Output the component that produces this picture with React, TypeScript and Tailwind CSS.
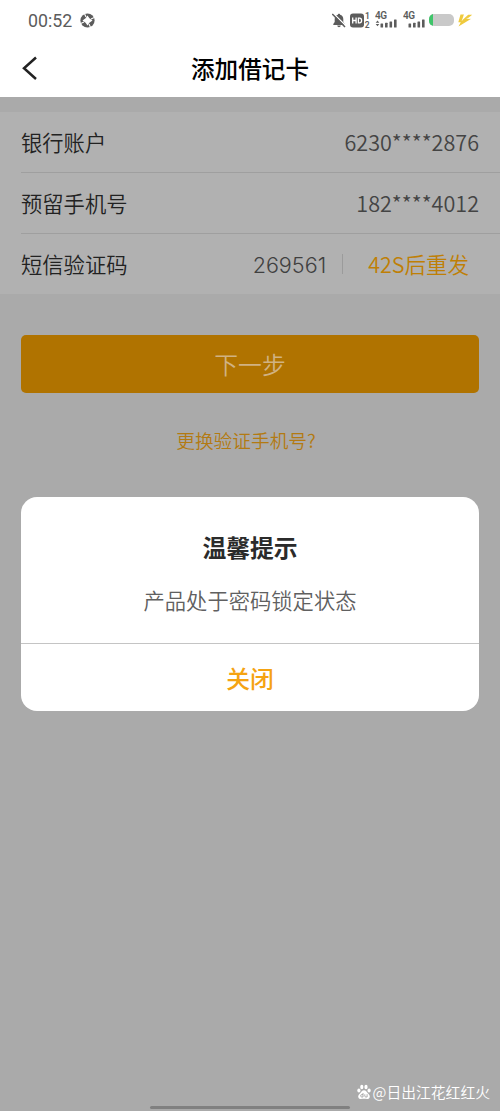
const rows = [
  { label: "银行账户", value: "6230****2876" },
  { label: "预留手机号", value: "182****4012" },
];

function SignalIcon({ data = false }: { data?: boolean }) {
  return (
    <svg width="23" height="18" viewBox="0 0 23 18" fill="#5c5c5c">
      <text x="0" y="8" fontSize="10" fontWeight="600" fontFamily="Roboto" textLength="12">
        4G
      </text>
      {data && <path d="M.7 11.7l1.8-2.3 1.8 2.3zM.7 13h3.6l-1.8 2.3z" />}
      <rect x="5.5" y="12.6" width="2.6" height="4" rx=".5" />
      <rect x="10" y="11.8" width="2.6" height="4.8" rx=".5" />
      <rect x="14.5" y="10.4" width="2.6" height="6.2" rx=".5" />
      <rect x="19" y="8.6" width="2.6" height="8" rx=".5" />
    </svg>
  );
}

function StatusBar() {
  return (
    <div className="flex h-10 items-center pl-7 text-[#5c5c5c]">
      <span className="mt-0.5 font-['Roboto',sans-serif] text-[17.8px] leading-none">00:52</span>
      <svg className="ml-2" width="15" height="15" viewBox="0 0 15 15">
        <circle cx="7.5" cy="7.5" r="7.1" fill="#5c5c5c" />
        <path d="M7.5 2.5 9.4 5.2 12.5 7.5 9.4 9.8 7.5 12.5 5.6 9.8 2.5 7.5 5.6 5.2z" fill="#fff" />
        <path d="M4.2 0 6 4M15 4.2l-4 1.8M10.8 15 9 11M0 10.8l4-1.8" stroke="#fff" strokeWidth="1.1" />
      </svg>
      <div className="ml-auto flex items-center pr-[27px]">
        <svg width="14" height="15" viewBox="0 0 14 15">
          <path d="M7 .8c.7 0 1.1.4 1.1 1 2 .5 3.2 2 3.2 4.1v3.2l1.4 2v.8H1.3v-.8l1.4-2V5.9c0-2.1 1.2-3.6 3.2-4.1 0-.6.4-1 1.1-1zM5.2 12.6h3.6c-.2 1-.9 1.6-1.8 1.6s-1.6-.6-1.8-1.6z" fill="#5c5c5c" />
          <path d="M1.2.2 14 13" stroke="#fff" strokeWidth="1.3" />
          <path d="M.3 1 13 14" stroke="#5c5c5c" strokeWidth="1.5" />
        </svg>
        <svg className="ml-1" width="20" height="17" viewBox="0 0 20 17" fill="#5c5c5c">
          <rect x="0" y="1.5" width="14" height="14" rx="3" />
          <path d="M2.7 5.5v6M6.1 5.5v6M2.7 8.5h3.4M8.4 6.1v4.8h1.2q2 0 2-2.4t-2-2.4z" stroke="#fff" strokeWidth="1.3" fill="none" />
          <text x="15" y="7" fontSize="8.5" fontWeight="600" fontFamily="Roboto">1</text>
          <text x="14.8" y="16" fontSize="8.5" fontWeight="600" fontFamily="Roboto">2</text>
        </svg>
        <div className="ml-[5px] flex gap-[5px]">
          <SignalIcon data />
          <SignalIcon />
        </div>
        <div className="ml-[3px] h-3 w-[25px] overflow-hidden rounded-[5px] bg-[#c9c9c9]">
          <div className="h-full w-1 bg-[#3fc56a]" />
        </div>
        <svg className="ml-1" width="15" height="13" viewBox="0 0 15 13" fill="#efca3d">
          <path d="M2.5.5H6L4.2 6.2 10.2.7h4L9.2 4.8h4L.5 12.6l2.3-4.4H.3z" />
          <path d="M6.6.2 4 6.8M13.2 4.4H8.6" stroke="#fff" strokeWidth=".5" />
        </svg>
      </div>
    </div>
  );
}

function Header() {
  return (
    <header className="h-[97px] bg-white">
      <StatusBar />
      <div className="grid h-[57px] grid-cols-[60px_1fr_60px] items-center">
        <svg className="-mt-0.5 ml-[22px]" width="16" height="24" viewBox="0 0 16 24" fill="none">
          <path d="M14 1.5 2 12.3 14 23" stroke="#222" strokeWidth="2.5" />
        </svg>
        <h1 className="text-center text-[23.6px] leading-none font-medium text-black">添加借记卡</h1>
      </div>
    </header>
  );
}

function Dialog() {
  return (
    <div className="absolute inset-x-[21px] top-[497px] flex h-[214px] flex-col rounded-2xl bg-white text-center">
      <div className="flex h-[147px] flex-col items-center border-b border-[#c4c4c4] pt-[37px]">
        <h2 className="text-[23.8px] leading-[26px] font-bold text-[#2b2b2b]">温馨提示</h2>
        <p className="mt-[27px] text-[21.3px] leading-[26px] font-[350] text-[#606060]">产品处于密码锁定状态</p>
      </div>
      <button className="flex-1 text-[23.8px] font-medium text-[#f5a312]">关闭</button>
    </div>
  );
}

function Watermark() {
  return (
    <div className="absolute top-[1082px] right-[10px] flex h-5 items-center text-white">
      <svg width="14" height="16" viewBox="0 0 14 16" fill="white">
        <ellipse cx="1.9" cy="6.5" rx="1.6" ry="2.1" />
        <ellipse cx="4.8" cy="3" rx="1.6" ry="2.2" />
        <ellipse cx="9" cy="3" rx="1.6" ry="2.2" />
        <ellipse cx="12.1" cy="6.5" rx="1.6" ry="2.1" />
        <path d="M7 6.3c2 0 2.6 1.8 4 3.1 1.5 1.4 2.2 2.4 1.6 4-.9 2.3-3.3 1.3-5.6 1.3s-4.7 1-5.6-1.3c-.6-1.6.1-2.6 1.6-4C4.4 8.1 5 6.3 7 6.3z" />
        <path d="M6 9v4H4.7q-1 0-1-1.2t1-1.2H6M7.8 10.3v1.7q0 1 1 1h1.3v-2.8" fill="none" stroke="#999" strokeWidth=".8" />
      </svg>
      <span className="ml-0.5 text-[14.8px] leading-none font-[350]">@日出江花红红火</span>
    </div>
  );
}

export default function App() {
  return (
    <div className="relative h-[1111px] w-[500px] overflow-hidden bg-[#aaaaaa] font-['Noto_Sans_CJK_SC',sans-serif]">
      <Header />
      <section className="mt-[15px] h-[182px] bg-[#b1b1b1] pl-[21px] text-[21.3px] leading-none font-[350] text-[#222]">
        {rows.map((row) => (
          <div
            key={row.label}
            className="flex h-[61px] items-center justify-between border-b border-[#9f9f9f] pr-[21px] pb-px"
          >
            <span>{row.label}</span>
            <span className="text-[21.6px] text-[#444]">{row.value}</span>
          </div>
        ))}
        <div className="flex h-[60px] items-center pr-[31px]">
          <span>短信验证码</span>
          <span className="mt-1 ml-auto font-['Inter',sans-serif] text-[21.6px] font-light text-[#404040]">
            269561
          </span>
          <span className="mr-[25px] ml-4 h-5 w-px bg-[#9b9b9b]" />
          <span className="text-[21.5px] text-[#bf7f05]">42S后重发</span>
        </div>
      </section>
      <div className="flex flex-col items-center px-[21px] pt-[41px]">
        <button className="h-[58px] w-full rounded-[5px] bg-[#b07300] text-[23.8px] font-[350] text-[#d0b283]">
          下一步
        </button>
        <a className="mt-[37px] mr-2 text-[18.7px] leading-5 font-[350] text-[#b37a12]">更换验证手机号?</a>
      </div>
      <Dialog />
      <div className="absolute top-[1106px] left-[150px] h-[3px] w-[200px] rounded-full bg-[#808080]" />
      <Watermark />
    </div>
  );
}
